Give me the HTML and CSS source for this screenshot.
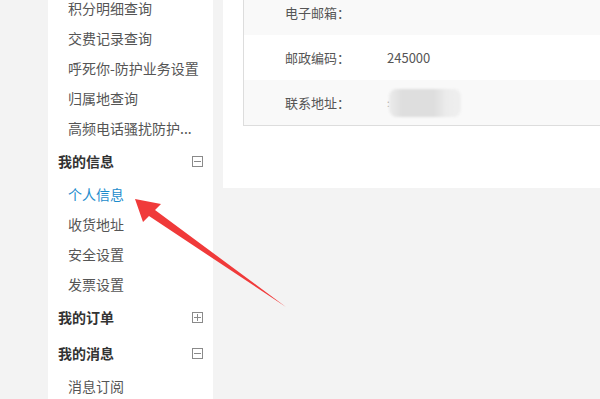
FILE: index.html
```html
<!DOCTYPE html>
<html lang="zh-CN">
<head>
    <meta charset="UTF-8">
    <title>个人信息</title>
    <link rel="stylesheet" href="styles.css">
</head>
<body>
    <div class="page">
        <div class="sidebar">
            <a class="item">积分明细查询</a>
            <a class="item">交费记录查询</a>
            <a class="item">呼死你-防护业务设置</a>
            <a class="item">归属地查询</a>
            <a class="item">高频电话骚扰防护...</a>

            <div class="group">我的信息 <span class="toggle minus"></span></div>
            <a class="item active">个人信息</a>
            <a class="item">收货地址</a>
            <a class="item">安全设置</a>
            <a class="item">发票设置</a>

            <div class="group">我的订单 <span class="toggle plus"></span></div>

            <div class="group">我的消息 <span class="toggle minus"></span></div>
            <a class="item">消息订阅</a>
        </div>

        <div class="main">
            <div class="info">
                <div class="row odd">
                    <span class="label">电子邮箱：</span>
                    <span class="value"></span>
                </div>
                <div class="row">
                    <span class="label">邮政编码：</span>
                    <span class="value">245000</span>
                </div>
                <div class="row odd">
                    <span class="label">联系地址：</span>
                    <span class="value"><span class="dot">:</span><span class="blur"></span></span>
                </div>
            </div>
        </div>
    </div>

    <!-- red arrow pointing at the active menu item -->
    <svg class="arrow" width="600" height="399" viewBox="0 0 600 399">
        <polygon points="135,199 161,204 155,210 286,307 149,216 143,222" fill="#f03a3a"/>
    </svg>
</body>
</html>
```

FILE: styles.css
```css
body {
    margin: 0;
    padding: 0;
    background-color: #f3f3f3;
    font-family: "Microsoft YaHei", "Noto Sans CJK SC", sans-serif;
    overflow: hidden;
}

.page {
    display: flex;
    align-items: flex-start;
    gap: 10px;
    padding-left: 48px;
    height: 399px;
}

.sidebar {
    width: 165px;
    height: 420px;
    margin-top: -7px;
    background-color: #fff;
    display: flex;
    flex-direction: column;
}

.item {
    display: block;
    height: 30px;
    line-height: 30px;
    padding-left: 20px;
    font-size: 14px;
    color: #555;
    white-space: nowrap;
    overflow: hidden;
}

.item.active {
    color: #1c8ccc;
}

.group {
    display: flex;
    align-items: center;
    justify-content: space-between;
    height: 36px;
    padding: 0 10px 0 10px;
    font-size: 14px;
    font-weight: bold;
    color: #333;
}

.toggle {
    position: relative;
    width: 9px;
    height: 9px;
    border: 1px solid #8a8a8a;
}

.toggle::before,
.toggle::after {
    content: "";
    position: absolute;
    background-color: #8a8a8a;
}

.toggle::before {
    left: 1px;
    right: 1px;
    top: 4px;
    height: 1px;
}

.plus::after {
    top: 1px;
    bottom: 1px;
    left: 4px;
    width: 1px;
}

.main {
    flex: 1;
    height: 198px;
    margin-top: -10px;
    padding-left: 20px;
    background-color: #fff;
}

.info {
    border: 1px solid #ddd;
    border-top: none;
    border-right: none;
    margin-right: -20px;
}

.row {
    display: flex;
    align-items: center;
    height: 45px;
    font-size: 13px;
    color: #555;
}

.row.odd {
    background-color: #f9f9f9;
}

.label {
    width: 102px;
    padding-left: 41px;
}

.value {
    display: flex;
    align-items: center;
}

.dot {
    color: #999;
    font-size: 10px;
}

.blur {
    width: 72px;
    height: 28px;
    margin-left: -1px;
    border-radius: 8px;
    background: linear-gradient(90deg, #ececec 0%, #dedede 18%, #dedede 62%, #ececec 80%, #efefef 100%);
    filter: blur(1px);
}

.arrow {
    position: absolute;
    left: 0;
    top: 0;
    pointer-events: none;
}
```
